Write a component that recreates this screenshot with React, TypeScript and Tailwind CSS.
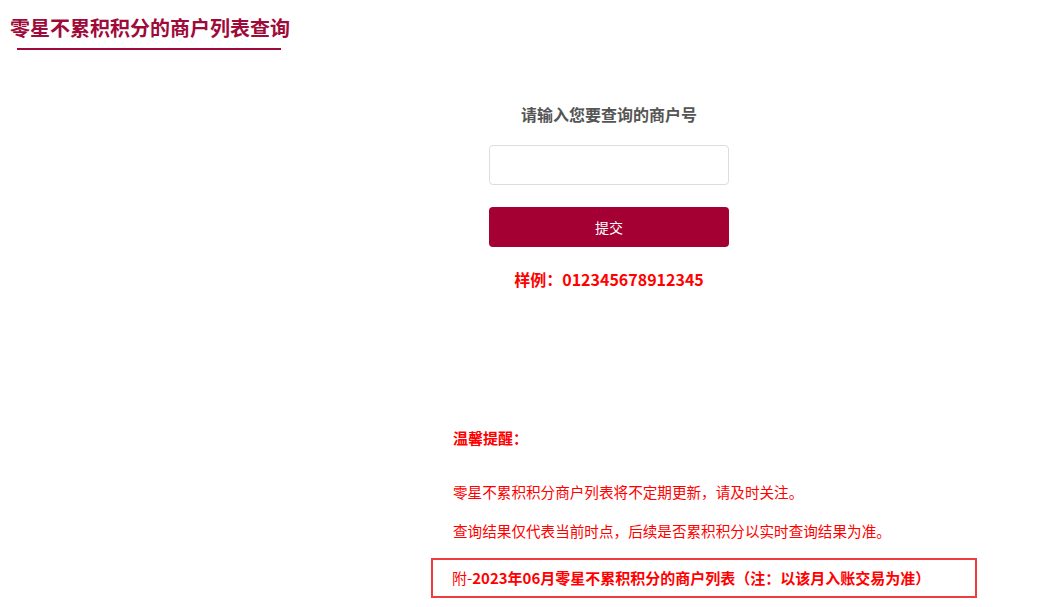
import React from "react";

const App = () => {
  return (
    <div className="min-h-screen bg-white font-['Noto_Sans_CJK_SC','Microsoft_YaHei',sans-serif]">
      <div className="pl-[10px] pt-[14px]">
        <h1 className="text-[20px] leading-[28px] font-bold text-[#9e0b3a]">零星不累积积分的商户列表查询</h1>
      </div>
      <div className="ml-[17px] mt-[6px] h-[2px] w-[264px] bg-[#9e0b3a]" />

      <div className="flex justify-center pl-[176px]">
        <div className="flex w-[240px] flex-col items-center">
          <p className="mt-[52px] text-[16px] leading-[24px] font-bold text-[#555]">请输入您要查询的商户号</p>
          <input
            type="text"
            className="mt-[19px] h-[40px] w-full rounded border border-[#ddd] px-3 outline-none"
          />
          <button className="mt-[22px] h-[40px] w-full rounded bg-[#a50034] text-[14px] text-white">
            提交
          </button>
          <p className="mt-[20px] text-[16px] leading-[24px] font-bold whitespace-nowrap text-[#f00]">
            样例：012345678912345
          </p>
        </div>
      </div>

      <div className="ml-[431px] w-[546px] text-[#f00]">
        <p className="mt-[136px] pl-[22px] text-[15px] leading-[22px] font-bold">温馨提醒：</p>
        <p className="mt-[33px] pl-[22px] text-[14.6px] leading-[20px]">零星不累积积分商户列表将不定期更新，请及时关注。</p>
        <p className="mt-[19px] pl-[22px] text-[14.6px] leading-[20px]">查询结果仅代表当前时点，后续是否累积积分以实时查询结果为准。</p>
        <div className="mt-[17px] flex h-[40px] items-center border-2 border-[#f03c3c] pl-[19px]">
          <span className="text-[15px] whitespace-nowrap">
            附-<span className="font-bold">2023年06月零星不累积积分的商户列表（注：以该月入账交易为准）</span>
          </span>
        </div>
      </div>
    </div>
  );
};

export default App;
